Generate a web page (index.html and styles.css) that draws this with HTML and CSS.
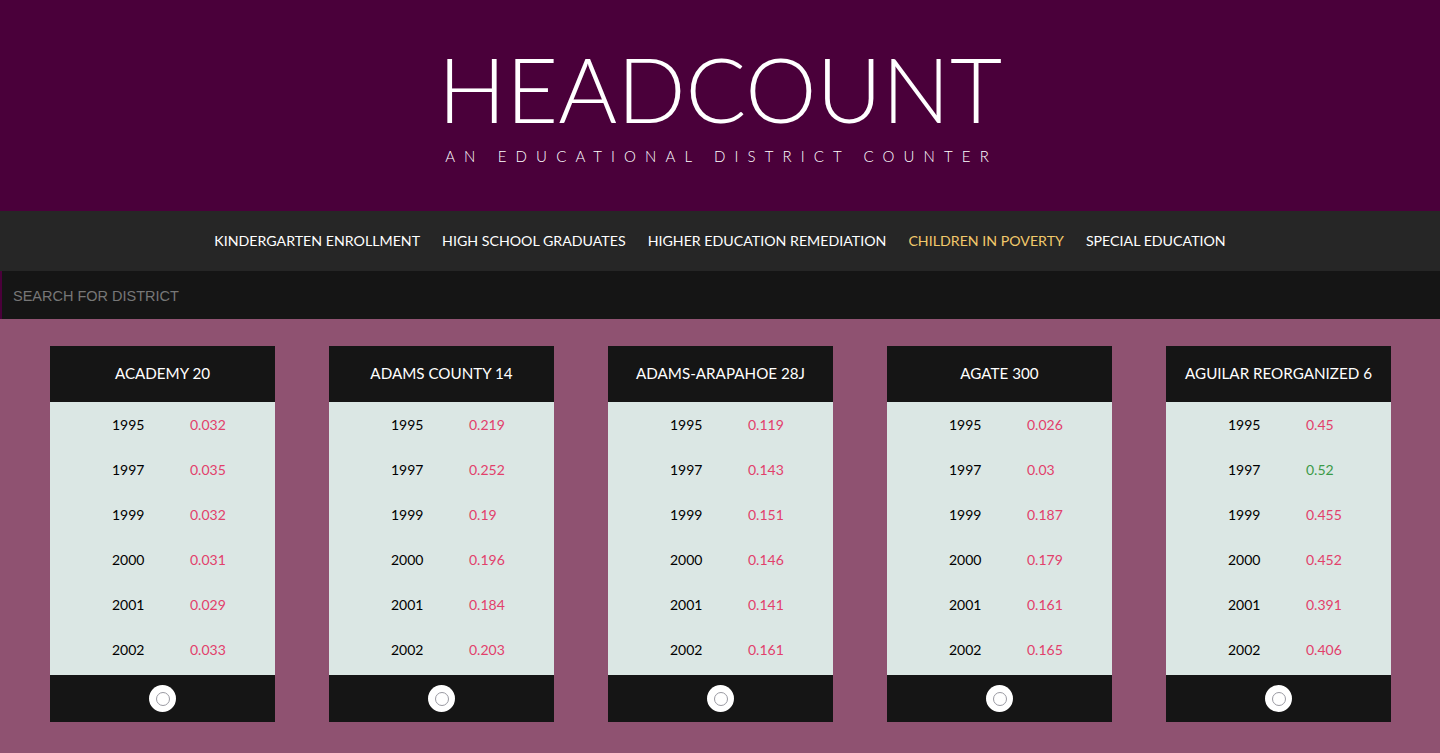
FILE: index.html
```html
<!DOCTYPE html>
<html>
<head>
<meta charset="utf-8">
<link rel="stylesheet" href="styles.css">
</head>
<body>
<header class="masthead">
  <h1 class="title">HEADCOUNT</h1>
  <p class="subtitle">AN EDUCATIONAL DISTRICT COUNTER</p>
</header>
<nav class="nav">
  <a class="nav-item">KINDERGARTEN ENROLLMENT</a>
  <a class="nav-item">HIGH SCHOOL GRADUATES</a>
  <a class="nav-item">HIGHER EDUCATION REMEDIATION</a>
  <a class="nav-item active">CHILDREN IN POVERTY</a>
  <a class="nav-item">SPECIAL EDUCATION</a>
</nav>
<div class="search">
  <input class="search-input" type="text" placeholder="SEARCH FOR DISTRICT">
</div>
<main class="cards">
  <section class="card">
    <h2 class="card-title">ACADEMY 20</h2>
    <div class="card-body">
      <div class="row"><span class="year">1995</span><span class="val">0.032</span></div>
      <div class="row"><span class="year">1997</span><span class="val">0.035</span></div>
      <div class="row"><span class="year">1999</span><span class="val">0.032</span></div>
      <div class="row"><span class="year">2000</span><span class="val">0.031</span></div>
      <div class="row"><span class="year">2001</span><span class="val">0.029</span></div>
      <div class="row"><span class="year">2002</span><span class="val">0.033</span></div>
    </div>
    <div class="card-foot"><span class="toggle"><span class="ring"></span></span></div>
  </section>
  <section class="card">
    <h2 class="card-title">ADAMS COUNTY 14</h2>
    <div class="card-body">
      <div class="row"><span class="year">1995</span><span class="val">0.219</span></div>
      <div class="row"><span class="year">1997</span><span class="val">0.252</span></div>
      <div class="row"><span class="year">1999</span><span class="val">0.19</span></div>
      <div class="row"><span class="year">2000</span><span class="val">0.196</span></div>
      <div class="row"><span class="year">2001</span><span class="val">0.184</span></div>
      <div class="row"><span class="year">2002</span><span class="val">0.203</span></div>
    </div>
    <div class="card-foot"><span class="toggle"><span class="ring"></span></span></div>
  </section>
  <section class="card">
    <h2 class="card-title">ADAMS-ARAPAHOE 28J</h2>
    <div class="card-body">
      <div class="row"><span class="year">1995</span><span class="val">0.119</span></div>
      <div class="row"><span class="year">1997</span><span class="val">0.143</span></div>
      <div class="row"><span class="year">1999</span><span class="val">0.151</span></div>
      <div class="row"><span class="year">2000</span><span class="val">0.146</span></div>
      <div class="row"><span class="year">2001</span><span class="val">0.141</span></div>
      <div class="row"><span class="year">2002</span><span class="val">0.161</span></div>
    </div>
    <div class="card-foot"><span class="toggle"><span class="ring"></span></span></div>
  </section>
  <section class="card">
    <h2 class="card-title">AGATE 300</h2>
    <div class="card-body">
      <div class="row"><span class="year">1995</span><span class="val">0.026</span></div>
      <div class="row"><span class="year">1997</span><span class="val">0.03</span></div>
      <div class="row"><span class="year">1999</span><span class="val">0.187</span></div>
      <div class="row"><span class="year">2000</span><span class="val">0.179</span></div>
      <div class="row"><span class="year">2001</span><span class="val">0.161</span></div>
      <div class="row"><span class="year">2002</span><span class="val">0.165</span></div>
    </div>
    <div class="card-foot"><span class="toggle"><span class="ring"></span></span></div>
  </section>
  <section class="card">
    <h2 class="card-title">AGUILAR REORGANIZED 6</h2>
    <div class="card-body">
      <div class="row"><span class="year">1995</span><span class="val">0.45</span></div>
      <div class="row"><span class="year">1997</span><span class="val high">0.52</span></div>
      <div class="row"><span class="year">1999</span><span class="val">0.455</span></div>
      <div class="row"><span class="year">2000</span><span class="val">0.452</span></div>
      <div class="row"><span class="year">2001</span><span class="val">0.391</span></div>
      <div class="row"><span class="year">2002</span><span class="val">0.406</span></div>
    </div>
    <div class="card-foot"><span class="toggle"><span class="ring"></span></span></div>
  </section>
</main>
</body>
</html>
```
FILE: styles.css
```css
* { box-sizing: border-box; }
html, body { margin: 0; padding: 0; }
body {
  background: #8f5271;
  font-family: Lato, "Liberation Sans", sans-serif;
  min-height: 753px;
}
.masthead {
  background: #4a003a;
  height: 211px;
  display: flex;
  flex-direction: column;
  align-items: center;
  padding-top: 38px;
}
.title {
  margin: 0;
  font-weight: 300;
  font-size: 90px;
  line-height: 100px;
  color: #fff;
  letter-spacing: 0;
}
.subtitle {
  margin: 8px 0 0;
  color: #fff;
  font-size: 15px;
  font-weight: 300;
  letter-spacing: 9.12px;
  line-height: 20px;
  margin-right: -9.12px;
  padding-right: 6px;
}
.nav {
  background: #262626;
  height: 60px;
  display: flex;
  justify-content: center;
  align-items: center;
  gap: 22px;
  padding-bottom: 1px;
}
.nav-item {
  color: #fff;
  font-size: 14.2px;
  line-height: 20px;
}
.nav-item.active { color: #f2c96b; }
.search {
  background: #151515;
  height: 48px;
  border-left: 2px solid #4a003a;
}
.search-input {
  width: 100%;
  height: 48px;
  background: transparent;
  border: 0;
  outline: none;
  padding: 1px 11px 0;
  color: #ccc;
  font-family: "Liberation Sans", Arial, sans-serif;
  font-size: 14.5px;
}
.search-input::placeholder { color: #777; }
.cards {
  display: flex;
  justify-content: center;
  gap: 54px;
  padding-top: 27px;
  padding-left: 1px;
}
.card {
  width: 225px;
  display: flex;
  flex-direction: column;
}
.card-title {
  margin: 0;
  background: #151515;
  color: #fff;
  height: 56px;
  display: flex;
  align-items: center;
  justify-content: center;
  font-size: 15.2px;
  font-weight: 400;
  padding-bottom: 2px;
}
.card-body {
  background: #dbe7e4;
  padding-bottom: 3px;
}
.row {
  height: 45px;
  display: flex;
  align-items: center;
  font-size: 14px;
}
.year {
  color: #000;
  width: 140px;
  padding-left: 62px;
}
.val { color: #e2406b; }
.val.high { color: #3b9a48; }
.card-foot {
  background: #151515;
  height: 47px;
  display: flex;
  align-items: center;
  justify-content: center;
}
.toggle {
  width: 27px;
  height: 27px;
  border-radius: 50%;
  background: #fff;
  display: flex;
  align-items: center;
  justify-content: center;
}
.ring {
  width: 14px;
  height: 14px;
  border-radius: 50%;
  border: 1.5px solid #9a9aa2;
}
```
